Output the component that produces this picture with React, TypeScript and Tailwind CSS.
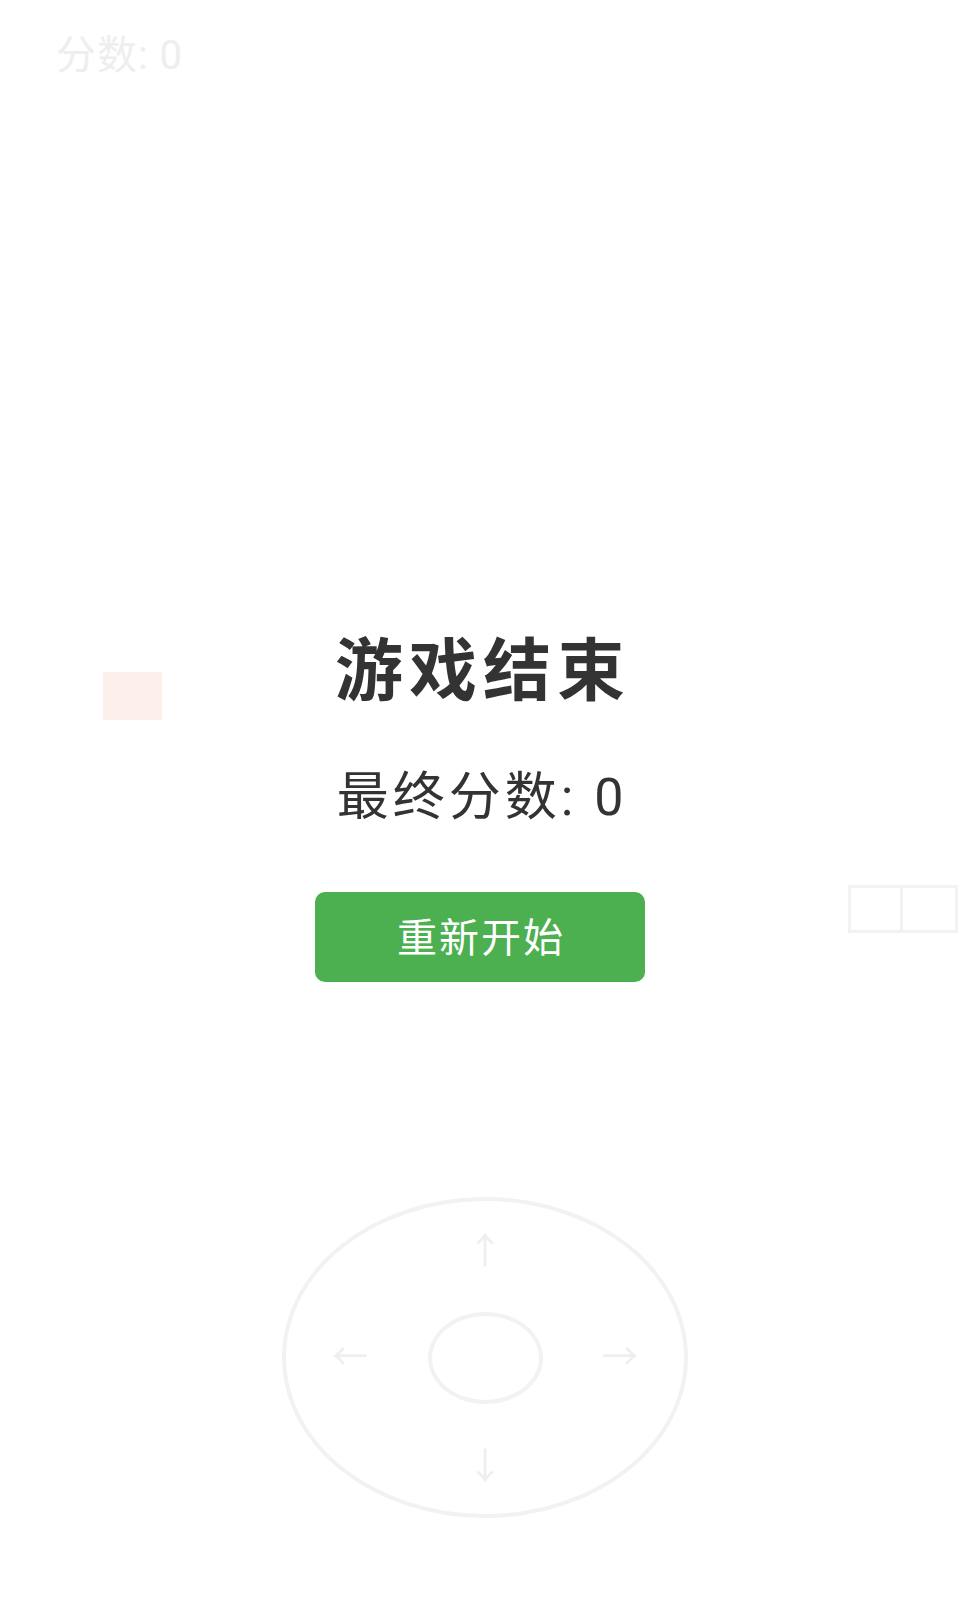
export default function App() {
  return (
    <div className="relative h-[1600px] w-[960px] overflow-hidden bg-white font-['Roboto','Noto_Sans_CJK_SC',sans-serif]">
      {/* game canvas, faded behind the overlay */}
      <div className="absolute left-[56px] top-[36px] text-[40px] leading-none tracking-[1px] text-[#eeeeee]">分数: 0</div>
      <div className="absolute left-[103px] top-[672px] h-[48px] w-[59px] bg-[#fdefe9]" />
      <div className="absolute left-[848px] top-[885px] flex">
        <div className="h-[48px] w-[55px] border-[3px] border-[#f0f3f2] bg-white" />
        <div className="h-[48px] w-[55px] border-[3px] border-l-0 border-[#f0f3f2] bg-white" />
      </div>

      {/* joystick */}
      <div className="absolute left-[282px] top-[1197px] flex h-[321px] w-[406px] items-center justify-center rounded-[50%] border-[4px] border-[#f2f2f2]">
        <div className="grid grid-cols-3 grid-rows-3 items-center justify-items-center text-[36px] leading-none text-[#eeeeee]">
          <span />
          <span className="pb-[28px]">↑</span>
          <span />
          <span className="pr-[40px]">←</span>
          <div className="h-[92px] w-[115px] rounded-[50%] border-[4px] border-[#f2f2f2]" />
          <span className="pl-[40px]">→</span>
          <span />
          <span className="pt-[34px]">↓</span>
          <span />
        </div>
      </div>

      {/* game over overlay */}
      <div className="relative flex flex-col items-center pt-[638px]">
        <h1 className="pl-[6px] text-[68px] font-bold leading-none tracking-[6px] text-[#333333]">游戏结束</h1>
        <p className="mt-[66px] pl-[4px] text-[52px] leading-none tracking-[4px] text-[#333333]">最终分数: 0</p>
        <button className="mt-[68px] flex h-[90px] w-[330px] items-center justify-center rounded-[10px] bg-[#4caf50] pl-[2px] pt-[4px] text-[40px] tracking-[2px] text-white">
          重新开始
        </button>
      </div>
    </div>
  );
}
